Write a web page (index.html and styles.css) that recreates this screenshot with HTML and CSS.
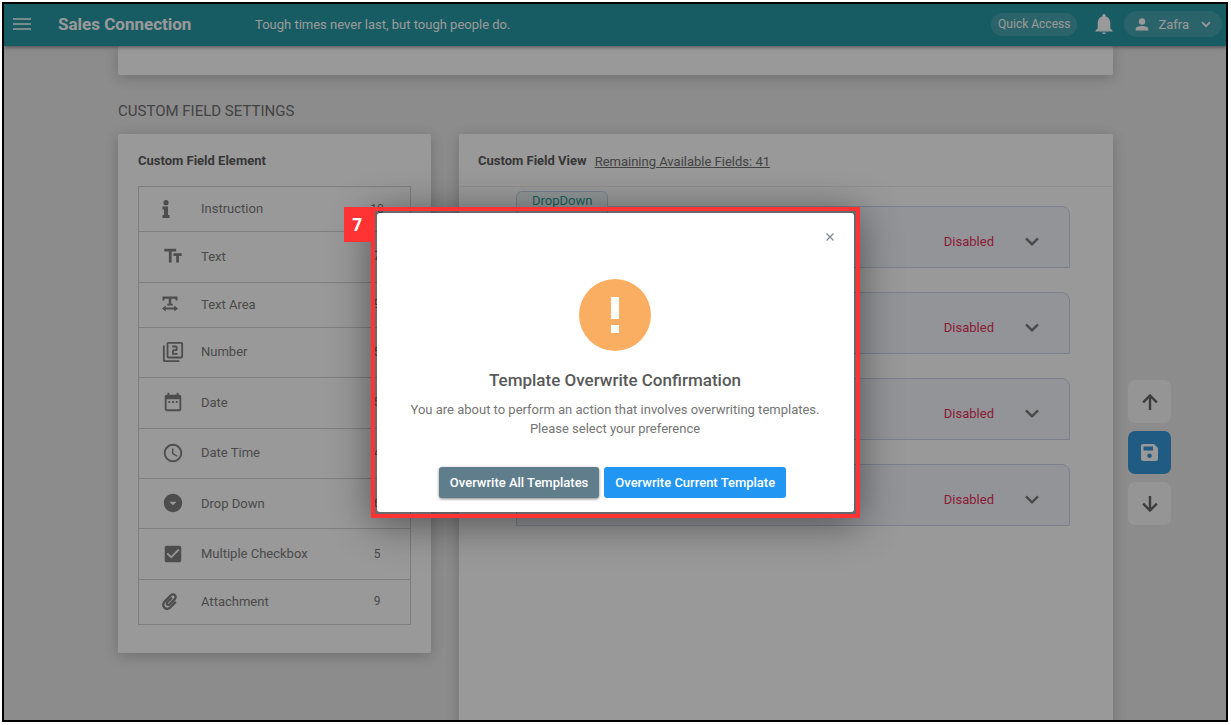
FILE: index.html
```html
<!DOCTYPE html>
<html lang="en">
<head>
<meta charset="utf-8">
<title>Sales Connection</title>
<link rel="stylesheet" href="styles.css">
</head>
<body>
<div class="frame">
  <header class="topbar">
    <button class="icon-btn menu-btn" aria-label="Menu">
      <svg width="20" height="14" viewBox="0 0 20 14"><path d="M1 2h18M1 7h18M1 12h18" stroke="currentColor" stroke-width="1.700" fill="none"/></svg>
    </button>
    <a class="brand" href="#">Sales Connection</a>
    <p class="quote">Tough times never last, but tough people do.</p>
    <button class="quick">Quick Access</button>
    <button class="icon-btn bell" aria-label="Notifications">
      <svg width="18" height="20" viewBox="3 2 18 20"><path fill="currentColor" d="M12 22c1.100 0 2-.7 2-1.500h-4c0 .8.9 1.500 2 1.500zm6.300-5.500V11c0-3.300-1.700-6-4.700-6.700V3.500C13.600 2.700 12.900 2 12 2s-1.600.7-1.600 1.500v.8C7.400 5 5.700 7.700 5.700 11v5.500L3.500 18.500v1h17v-1z"/></svg>
    </button>
    <button class="user">
      <svg width="14" height="13" viewBox="0 0 14 13"><circle cx="7" cy="3.500" r="3.200" fill="currentColor"/><path fill="currentColor" d="M.7 12.500v-1.700C.7 8.900 4 8 7 8s6.300.9 6.300 2.800v1.700z"/></svg>
      <span>Zafra</span>
      <svg width="10" height="7" viewBox="0 0 10 7"><path d="M1 1.200l4 4 4-4" stroke="currentColor" stroke-width="1.800" fill="none"/></svg>
    </button>
  </header>

  <main class="content">
    <section class="card previous"></section>
    <h1 class="section-title">CUSTOM FIELD SETTINGS</h1>
    <div class="columns">
      <section class="card elements">
        <h2 class="card-title">Custom Field Element</h2>
        <ul class="list">
          <li class="row short"><svg class="small" viewBox="0 0 16 18"><circle cx="4" cy="2.700" r="2.600" fill="currentColor"/><path fill="currentColor" d="M.5 6.500H6v8.500h1.500v3H.5v-3H2V9.500H.5z"/></svg><span>Instruction</span><b>10</b></li>
          <li class="row"><svg viewBox="0 0 24 24"><path fill="currentColor" d="M2.500 4v3h5v12h3V7h5V4h-13zm19 5h-9v3h3v7h3v-7h3V9z"/></svg><span>Text</span><b>7</b></li>
          <li class="row short"><svg class="small" viewBox="0 0 16 16"><path fill="currentColor" d="M.5.5h15v4h-2V2.800H9.200v5h1.600v1.700H5.200V7.800h1.600v-5H2.500v1.700h-2z"/><path fill="currentColor" d="M0 12.500 3.700 9.500v2h8.600v-2l3.700 3-3.700 3v-2H3.700v2z"/></svg><span>Text Area</span><b>9</b></li>
          <li class="row"><svg viewBox="0 0 24 24"><path fill="currentColor" d="M3 5H1v16c0 1.100.9 2 2 2h16v-2H3V5zm18-4H7c-1.100 0-2 .9-2 2v14c0 1.100.9 2 2 2h14c1.100 0 2-.9 2-2V3c0-1.100-.9-2-2-2zm0 16H7V3h14v14zm-4-4h-4v-2h2c1.100 0 2-.9 2-2V7c0-1.100-.9-2-2-2h-4v2h4v2h-2c-1.100 0-2 .9-2 2v4h6v-2z"/></svg><span>Number</span><b>5</b></li>
          <li class="row"><svg viewBox="0 0 24 24"><path fill="currentColor" d="M9 11H7v2h2v-2zm4 0h-2v2h2v-2zm4 0h-2v2h2v-2zm2-7h-1V2h-2v2H8V2H6v2H5c-1.100 0-2 .9-2 2v14c0 1.100.9 2 2 2h14c1.100 0 2-.9 2-2V6c0-1.100-.9-2-2-2zm0 16H5V9h14v11z"/></svg><span>Date</span><b>5</b></li>
          <li class="row"><svg viewBox="0 0 24 24"><path fill="currentColor" d="M12 2C6.500 2 2 6.500 2 12s4.500 10 10 10 10-4.500 10-10S17.500 2 12 2zm0 18c-4.400 0-8-3.600-8-8s3.600-8 8-8 8 3.600 8 8-3.600 8-8 8zm.5-13H11v6l5.200 3.200.8-1.300-4.500-2.700z"/></svg><span>Date Time</span><b>4</b></li>
          <li class="row"><svg viewBox="0 0 24 24"><path fill="currentColor" fill-rule="evenodd" d="M12 2C6.500 2 2 6.500 2 12s4.500 10 10 10 10-4.500 10-10S17.500 2 12 2zm0 12.500L8 10.500h8z"/></svg><span>Drop Down</span><b>6</b></li>
          <li class="row"><svg viewBox="0 0 24 24"><path fill="currentColor" d="M19 3H5c-1.100 0-2 .9-2 2v14c0 1.100.9 2 2 2h14c1.100 0 2-.9 2-2V5c0-1.100-.9-2-2-2zm-9 14l-5-5 1.400-1.400 3.600 3.600 7.600-7.600L19 8z"/></svg><span>Multiple Checkbox</span><b>5</b></li>
          <li class="row short"><svg class="small" viewBox="0 0 448 512"><path fill="currentColor" d="M43.200 467c-57-57.600-54.700-150.400-2.300-208.200L224 74.400c46.500-48.800 117-51.600 160-7.500 43.300 43.400 43.300 112.300.2 157.500L231.500 378c-30.500 31.500-78 32.500-109 1.500-30-30.500-30-78.500.2-108.500L245 147c6.200-6.300 16.300-6.400 22.600-.2l22.800 22.400c6.300 6.200 6.400 16.300.2 22.600L168.400 316c-5.700 6-5.700 14.500-.5 19.700 5 5 12.600 5 18-.5L338.500 179.500c18.600-19.500 18.600-49.500 0-68.500-18.300-18.300-46.800-17.600-69 5.300L86.600 300.500c-29.700 32.700-31.600 86.400 2 121 33.300 33.600 85 33 118-.8L357 266c6.200-6.300 16.300-6.400 22.600-.2l22.800 22.400c6.300 6.200 6.400 16.300.2 22.600L252.400 465.500c-58 59.500-151.500 59.500-209.200 1.500z"/></svg><span>Attachment</span><b>9</b></li>
        </ul>
      </section>

      <section class="card view">
        <div class="view-head">
          <h2 class="card-title">Custom Field View</h2>
          <a class="remaining" href="#">Remaining Available Fields: 41</a>
        </div>
        <div class="fields">
          <article class="field"><span class="tab">DropDown</span><span class="state">Disabled</span><button class="icon-btn expand" aria-label="Expand"><svg width="14" height="9" viewBox="0 0 14 9"><path d="M1 1.300l6 6 6-6" stroke="currentColor" stroke-width="2.400" fill="none"/></svg></button></article>
          <article class="field"><span class="state">Disabled</span><button class="icon-btn expand" aria-label="Expand"><svg width="14" height="9" viewBox="0 0 14 9"><path d="M1 1.300l6 6 6-6" stroke="currentColor" stroke-width="2.400" fill="none"/></svg></button></article>
          <article class="field"><span class="state">Disabled</span><button class="icon-btn expand" aria-label="Expand"><svg width="14" height="9" viewBox="0 0 14 9"><path d="M1 1.300l6 6 6-6" stroke="currentColor" stroke-width="2.400" fill="none"/></svg></button></article>
          <article class="field"><span class="state">Disabled</span><button class="icon-btn expand" aria-label="Expand"><svg width="14" height="9" viewBox="0 0 14 9"><path d="M1 1.300l6 6 6-6" stroke="currentColor" stroke-width="2.400" fill="none"/></svg></button></article>
        </div>
      </section>
    </div>
  </main>

  <nav class="float">
    <button class="float-btn" aria-label="Scroll up"><svg width="16" height="16" viewBox="0 0 16 16"><path d="M8 16V1.800M1.200 8.300 8 1.500l6.800 6.800" stroke="currentColor" stroke-width="2.400" fill="none"/></svg></button>
    <button class="float-btn save" aria-label="Save"><svg width="17" height="17" viewBox="0 0 17 17"><path fill="currentColor" fill-rule="evenodd" d="M2 0h11l4 4v11c0 1.100-.9 2-2 2H2c-1.100 0-2-.9-2-2V2C0 .9.900 0 2 0zm.5 2.500V6.500H12v-4zM8.500 9.500a2.300 2.300 0 1 0 0 4.600 2.300 2.300 0 0 0 0-4.600z"/></svg></button>
    <button class="float-btn" aria-label="Scroll down"><svg width="16" height="16" viewBox="0 0 16 16"><path d="M8 0v14.200M1.200 7.700 8 14.500l6.800-6.800" stroke="currentColor" stroke-width="2.400" fill="none"/></svg></button>
  </nav>

  <div class="overlay">
    <div class="callout">
      <span class="step">7</span>
      <div class="modal" role="dialog" aria-labelledby="modal-title">
        <button class="icon-btn close" aria-label="Close"><svg width="8" height="8" viewBox="0 0 8 8"><path d="M.5.5l7 7M7.500.5l-7 7" stroke="currentColor" stroke-width="1.200"/></svg></button>
        <svg class="alert" viewBox="0 0 72 72"><circle cx="36" cy="36" r="36" fill="#faae62"/><path fill="#fff" d="M32 18h8v22h-8zM32 46h8v8h-8z"/></svg>
        <h2 class="modal-title" id="modal-title">Template Overwrite Confirmation</h2>
        <p class="modal-text">You are about to perform an action that involves overwriting templates.<br>Please select your preference</p>
        <div class="actions">
          <button class="btn slate">Overwrite All Templates</button>
          <button class="btn blue">Overwrite Current Template</button>
        </div>
      </div>
    </div>
  </div>
</div>
</body>
</html>
```

FILE: styles.css
```css
* { box-sizing: border-box; }

body {
  margin: 0;
  padding: 2px 3px 3px 2px;
  background: #fff;
  font-family: Roboto, "Liberation Sans", sans-serif;
  font-size: 13px;
  color: #7c7c7c;
}

h1, h2, p, ul { margin: 0; padding: 0; }
button { font: inherit; cursor: pointer; border: 0; padding: 0; }
a { color: inherit; }
svg { display: block; flex: none; }

.icon-btn { background: none; color: inherit; }

.frame {
  position: relative;
  display: flex;
  flex-direction: column;
  height: calc(100vh - 5px);
  border: 2px solid #000;
  background: #e9e9e9;
  overflow: hidden;
}

/* Top bar */
.topbar {
  display: flex;
  align-items: center;
  flex: none;
  height: 42px;
  padding: 0 4px 2px 8px;
  background: #2899a5;
  color: #fff;
  box-shadow: 0 1px 4px rgba(0, 0, 0, .5);
  z-index: 1;
}
.brand { margin-left: 26px; width: 197px; font-size: 17px; font-weight: 700; text-decoration: none; }
.quote { flex: 1; }
.quick {
  height: 23px;
  padding: 0 7px;
  border-radius: 12px;
  background: rgba(255, 255, 255, .14);
  color: #fff;
  font-size: 12px;
}
.bell { margin: 0 11px 0 18px; }
.user {
  display: flex;
  align-items: center;
  height: 26px;
  padding: 0 11px;
  border-radius: 13px;
  background: rgba(255, 255, 255, .14);
  color: #fff;
}
.user span { margin: 0 12px 0 9px; }

/* Page content */
.content { flex: 1; min-height: 0; padding: 0 99px 0 100px; display: flex; flex-direction: column; }
.card { margin: 0 14px; background: #fff; border-radius: 2px; box-shadow: 0 3px 14px rgba(0, 0, 0, .2); }
.previous { height: 29px; flex: none; }
.section-title { margin: 26px 14px 13px; font-size: 15px; line-height: 20px; font-weight: 400; color: #707070; }
.columns { display: grid; grid-template-columns: 1fr 2fr; align-items: start; flex: 1; min-height: 0; }
.card-title { font-size: 13px; line-height: 20px; font-weight: 700; color: #5c5c5c; }

.elements { padding: 17px 20px 28px; }
.list {
  display: flex;
  flex-direction: column;
  min-height: 439px;
  margin-top: 15px;
  border: 1px solid #d2d2d2;
  list-style: none;
}
.row { display: flex; align-items: center; flex: 101 1 0; padding: 0 20px 1px 0; border-top: 1px solid #d2d2d2; }
.row:first-child { border-top: 0; }
.row.short { flex-grow: 90; }
.row svg { width: 22px; height: 22px; margin: 0 17px 0 23px; color: #808080; }
.row svg.small { width: 16px; height: 18px; margin-right: 23px; }
.row span { flex: 1; }
.row b { width: 26px; text-align: center; font-size: 12px; font-weight: 400; }

.view { align-self: stretch; min-height: 600px; }
.view-head {
  display: flex;
  align-items: center;
  gap: 8px;
  padding: 17px 19px 15px;
  border-bottom: 1px solid #efefef;
}
.remaining { color: #707070; }
.fields { display: flex; flex-direction: column; gap: 24px; padding: 19px 43px 0 57px; }
.field {
  position: relative;
  display: flex;
  align-items: center;
  justify-content: flex-end;
  height: 62px;
  padding: 8px 30px 0 0;
  border: 1px solid #ccd8ea;
  border-radius: 8px 8px 0 0;
  background: #f5f7fd;
}
.field:first-child { border-top-left-radius: 0; }
.tab {
  position: absolute;
  left: -1px;
  bottom: 48px;
  height: 28px;
  padding: 0 15px;
  border: 1px solid #ccd8ea;
  border-bottom: 0;
  border-radius: 6px 6px 0 0;
  background: #f1f9fa;
  color: #2ba69a;
  line-height: 18px;
}
.state { color: #e8305a; }
.expand { margin-left: 31px; color: #7c7c7c; }

/* Floating page controls */
.float { position: absolute; right: 55px; top: 376px; display: flex; flex-direction: column; gap: 8px; }
.float-btn {
  display: grid;
  place-items: center;
  width: 43px;
  height: 43px;
  border-radius: 7px;
  background: #f8f8f8;
  color: #666;
}
.float-btn.save { background: #3498db; color: #fff; }

/* Confirmation dialog */
.overlay {
  position: absolute;
  inset: 0;
  z-index: 2;
  display: flex;
  align-items: center;
  justify-content: center;
  background: rgba(0, 0, 0, .4);
}
.callout {
  position: relative;
  width: 489px;
  padding: 2px;
  border: 4px solid #ff3333;
  background: rgba(0, 0, 0, .3);
  box-shadow: 0 6px 38px rgba(0, 0, 0, .45);
}
.step {
  position: absolute;
  top: -4px;
  right: calc(100% + 4px);
  width: 27px;
  line-height: 35px;
  background: #ff3333;
  color: #fff;
  text-align: center;
  font-family: "Open Sans", sans-serif;
  font-size: 17px;
  font-weight: 700;
}
.modal {
  position: relative;
  display: flex;
  flex-direction: column;
  align-items: center;
  padding: 66px 24px 14px;
  border-radius: 3px;
  background: #fff;
  text-align: center;
}
.close { position: absolute; top: 20px; right: 20px; color: #808890; }
.alert { width: 72px; height: 72px; }
.modal-title { margin-top: 17px; font-size: 17px; line-height: 24px; font-weight: 500; color: #595959; }
.modal-text { margin-top: 8px; line-height: 19px; color: #757575; }
.actions { display: flex; gap: 5px; margin-top: 29px; padding-right: 5px; }
.btn { height: 31px; padding: 0 11px; border-radius: 3px; color: #fff; font-weight: 500; }
.slate { background: #607d8b; box-shadow: 0 1px 3px rgba(0, 0, 0, .5); }
.blue { background: #2196f3; }
```
